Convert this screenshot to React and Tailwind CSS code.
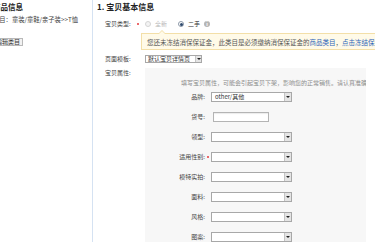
import React from "react";

function Arrow() {
  return (
    <span className="w-[7px] h-[8px] mr-[0px] bg-[#e4e4e4] border-l border-[#c4c4c4] flex items-center justify-center shrink-0">
      <span className="w-0 h-0 border-l-[2px] border-r-[2px] border-t-[2px] border-l-transparent border-r-transparent border-t-[#222]" />
    </span>
  );
}

function Sel({ text = "", w = "w-[81px]" }) {
  return (
    <div className={`h-[10px] ${w} border border-[#a8a8a8] bg-white flex items-center`}>
      <span className="flex-1 pl-[3px] text-[6px] leading-[8px] text-[#333] whitespace-nowrap overflow-hidden">{text}</span>
      <Arrow />
    </div>
  );
}

function AttrRow({ label, req, children }) {
  return (
    <div className="flex items-center h-[10px]">
      <div className="w-[60px] text-right text-[6px] leading-[10px] text-[#444] whitespace-nowrap">{label}</div>
      <div className="w-[6px] flex items-center justify-center">
        {req ? <span className="w-[2px] h-[2px] rounded-full bg-[#e4393c]" /> : null}
      </div>
      {children}
    </div>
  );
}

export default function App() {
  return (
    <div className="w-[375px] h-[242px] overflow-hidden bg-white flex font-['Noto_Sans_CJK_SC',sans-serif]">
      {/* left sidebar */}
      <div className="w-[93px] shrink-0 border-r border-[#d5e2f2] overflow-hidden">
        <div className="-ml-[7px]">
          <div className="mt-[2px] h-[10px] leading-[10px] text-[7.5px] font-bold text-[#222] whitespace-nowrap">商品信息</div>
          <div className="mt-[3px] h-[10px] leading-[10px] text-[6.3px] text-[#444] whitespace-nowrap">类目：童装/童鞋/亲子装&gt;&gt;T恤</div>
          <div className="mt-[2px] ml-[0px] inline-flex h-[8px] items-center px-[2px] border border-[#b9b9b9] bg-[#f2f2f2] text-[6px] leading-[8px] text-[#333] whitespace-nowrap">编辑类目</div>
        </div>
      </div>

      {/* right content */}
      <div className="flex-1 min-w-0 overflow-hidden pl-[4px]">
        <div className="mt-[2px] h-[10px] leading-[10px] text-[8px] font-bold text-[#222] whitespace-nowrap">1. 宝贝基本信息</div>

        <div className="ml-[8px]">
          {/* 宝贝类型 */}
          <div className="mt-[7px] flex items-center h-[10px]">
            <div className="w-[40px] flex items-center text-[6px] leading-[10px] text-[#444] whitespace-nowrap">
              宝贝类型:
              <span className="ml-[6px] w-[2px] h-[2px] rounded-full bg-[#e4393c]" />
            </div>
            <span className="w-[6px] h-[6px] rounded-full border border-[#d4d4d4] bg-[#f4f4f4]" />
            <span className="ml-[4px] text-[6px] leading-[10px] text-[#b8b8b8]">全新</span>
            <span className="ml-[11px] w-[6px] h-[6px] rounded-full border border-[#8d99a8] bg-white flex items-center justify-center">
              <span className="w-[3px] h-[3px] rounded-full bg-[#2f4a6e]" />
            </span>
            <span className="ml-[4px] text-[6px] leading-[10px] text-[#333]">二手</span>
            <span className="ml-[4px] w-[6px] h-[6px] rounded-full bg-[#b5b5b5] flex items-center justify-center text-white text-[5px] leading-[6px] font-bold">i</span>
          </div>

          {/* notice */}
          <div className="relative mt-[4px] ml-[36px] w-[260px] h-[17px] border border-[#f3dfa8] bg-[#fffae8] flex items-center pl-[5px] text-[6.5px] leading-[10px] text-[#555] whitespace-nowrap">
            <span className="absolute -top-[4px] left-[16px] w-0 h-0 border-l-[4px] border-r-[4px] border-b-[4px] border-l-transparent border-r-transparent border-b-[#f3dfa8]" />
            <span className="absolute -top-[3px] left-[17px] w-0 h-0 border-l-[3px] border-r-[3px] border-b-[3px] border-l-transparent border-r-transparent border-b-[#fffae8]" />
            您还未冻结消保保证金，此类目是必须缴纳消保保证金的<span className="text-[#2a63b8]">商品类目</span>，<span className="text-[#2a63b8]">点击冻结保证金</span>
          </div>

          {/* 页面模板 */}
          <div className="mt-[4px] flex items-center h-[10px]">
            <div className="w-[40px] text-[6px] leading-[10px] text-[#444] whitespace-nowrap">页面模板:</div>
            <div className="h-[8px] w-[57px] border border-[#a8a8a8] bg-white flex items-center">
              <span className="flex-1 pl-[2px] text-[6px] leading-[6px] text-[#333] whitespace-nowrap overflow-hidden">默认宝贝详情页</span>
              <span className="w-[6px] h-[6px] bg-[#e4e4e4] border-l border-[#c4c4c4] flex items-center justify-center">
                <span className="w-0 h-0 border-l-[2px] border-r-[2px] border-t-[2px] border-l-transparent border-r-transparent border-t-[#222]" />
              </span>
            </div>
          </div>

          {/* 宝贝属性 */}
          <div className="mt-[4px] flex items-start">
            <div className="w-[40px] h-[10px] text-[6px] leading-[10px] text-[#444] whitespace-nowrap">宝贝属性:</div>
            <div className="w-[221px] h-[200px] bg-[#f7f7f7] overflow-hidden pt-[10px]">
              <div className="pl-[36px] h-[10px] text-[6px] leading-[10px] text-[#8c8c8c] whitespace-nowrap">
                填写宝贝属性，可能会引起宝贝下架，影响您的正常销售。请认真准确填写！
              </div>
              <div className="mt-[4px] flex flex-col gap-[10px]">
                <AttrRow label="品牌:"><Sel text="other/其他" /></AttrRow>
                <AttrRow label="货号:">
                  <div className="ml-[2px] h-[10px] w-[56px] border border-[#b4b4b4] bg-white shadow-[inset_0_1px_1px_rgba(0,0,0,0.08)]" />
                </AttrRow>
                <AttrRow label="领型:"><Sel /></AttrRow>
                <AttrRow label="适用性别:" req><Sel /></AttrRow>
                <AttrRow label="模特实拍:"><Sel /></AttrRow>
                <AttrRow label="面料:"><Sel /></AttrRow>
                <AttrRow label="风格:"><Sel /></AttrRow>
                <AttrRow label="图案:"><Sel /></AttrRow>
              </div>
            </div>
          </div>
        </div>
      </div>
    </div>
  );
}
